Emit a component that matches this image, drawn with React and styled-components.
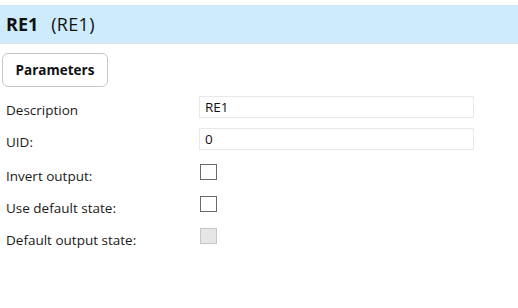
import React from "react";
import styled, { createGlobalStyle } from "styled-components";

const Global = createGlobalStyle`
  html, body { margin: 0; padding: 0; background: #ffffff; }
  body { font-family: "Open Sans", "Noto Sans", sans-serif; color: #1a1a1a; }
`;

const Page = styled.div`
  width: 518px;
  height: 308px;
  padding-top: 5px;
  box-sizing: border-box;
  background: #ffffff;
`;

const Header = styled.div`
  height: 38px;
  background: #cdebfc;
  border-bottom: 1px solid #e1e1e1;
  display: flex;
  align-items: center;
  padding-left: 6px;
  gap: 13px;
  font-size: 18px;
  color: #111;
`;

const Name = styled.span`
  font-weight: 700;
`;

const Sub = styled.span`
  font-weight: 400;
  letter-spacing: 0.3px;
`;

const Toolbar = styled.div`
  padding: 9px 0 0 2px;
  display: flex;
`;

const TabButton = styled.button`
  width: 106px;
  height: 34px;
  border: 1px solid #c6c6c6;
  border-radius: 6px;
  background: #ffffff;
  font-family: inherit;
  font-size: 13.5px;
  font-weight: 700;
  color: #111;
  padding: 0;
  cursor: pointer;
`;

const Form = styled.div`
  margin-top: 9px;
  display: grid;
  grid-template-columns: 199px 275px;
  grid-auto-rows: 22px;
  row-gap: 10px;
`;

const Label = styled.div`
  padding-left: 6px;
  padding-top: ${(p) => p.$pad}px;
  font-size: 13.5px;
  line-height: 20px;
  white-space: nowrap;
  color: #1a1a1a;
`;

const TextInput = styled.input`
  box-sizing: border-box;
  width: 275px;
  height: 22px;
  border: 1px solid #e8e8e8;
  background: #ffffff;
  font-family: inherit;
  font-size: 13.5px;
  color: #111;
  padding: 0 5px;
  outline: none;
`;

const Cell = styled.div`
  display: flex;
  align-items: flex-start;
`;

const Check = styled.span`
  box-sizing: border-box;
  display: block;
  width: 17px;
  height: 16px;
  margin-top: 4px;
  margin-left: 1px;
  border: 1px solid ${(p) => (p.$disabled ? "#c6c6c6" : "#6a6a6a")};
  background: ${(p) => (p.$disabled ? "#e6e6e6" : "#ffffff")};
`;

export default function App() {
  return (
    <Page>
      <Global />
      <Header>
        <Name>RE1</Name>
        <Sub>(RE1)</Sub>
      </Header>
      <Toolbar>
        <TabButton>Parameters</TabButton>
      </Toolbar>
      <Form>
        <Label $pad={4}>Description</Label>
        <Cell>
          <TextInput defaultValue="RE1" />
        </Cell>
        <Label $pad={4}>UID:</Label>
        <Cell>
          <TextInput defaultValue="0" />
        </Cell>
        <Label $pad={6}>Invert output:</Label>
        <Cell>
          <Check />
        </Cell>
        <Label $pad={6}>Use default state:</Label>
        <Cell>
          <Check />
        </Cell>
        <Label $pad={6}>Default output state:</Label>
        <Cell>
          <Check $disabled />
        </Cell>
      </Form>
    </Page>
  );
}
